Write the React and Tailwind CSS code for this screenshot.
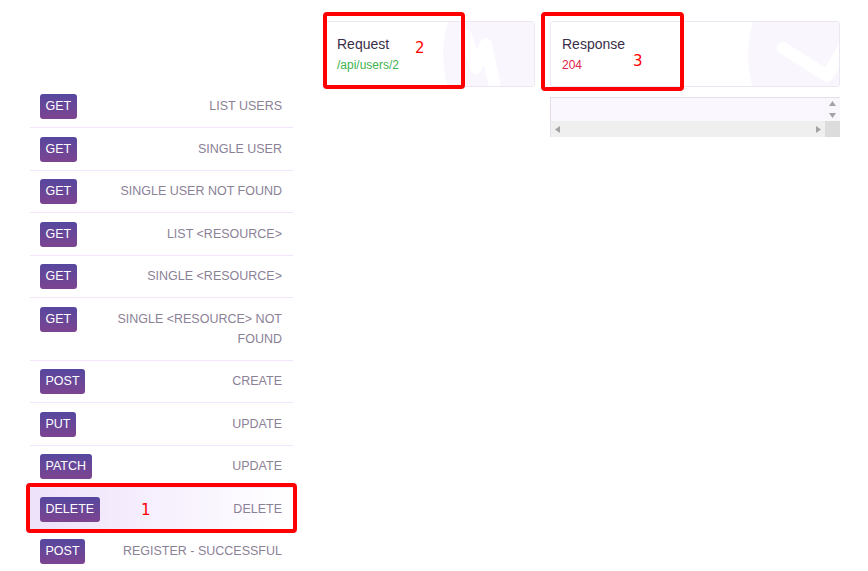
import React from "react";

const endpoints = [
    { method: "GET", label: "LIST USERS" },
    { method: "GET", label: "SINGLE USER" },
    { method: "GET", label: "SINGLE USER NOT FOUND" },
    { method: "GET", label: "LIST <RESOURCE>" },
    { method: "GET", label: "SINGLE <RESOURCE>" },
    { method: "GET", label: "SINGLE <RESOURCE> NOT FOUND" },
    { method: "POST", label: "CREATE" },
    { method: "PUT", label: "UPDATE" },
    { method: "PATCH", label: "UPDATE" },
    { method: "DELETE", label: "DELETE", active: true },
    { method: "POST", label: "REGISTER - SUCCESSFUL" },
];

function Watermark({ width, shape }) {
    return (
        <svg
            className="absolute inset-0 pointer-events-none"
            width={width}
            height="66"
            viewBox={`0 0 ${width} 66`}
        >
            <circle cx={width + 17} cy="33" r="110" fill="#faf6fe" />
            <polyline
                points={shape}
                fill="none"
                stroke="#ffffff"
                strokeWidth="12"
                strokeLinecap="round"
                strokeLinejoin="round"
            />
        </svg>
    );
}

function Card({ width, title, value, valueClass, shape }) {
    return (
        <div
            className="relative overflow-hidden h-[66px] rounded-[3px] border border-[#ece7f1] bg-white pl-[11px] pt-[12px]"
            style={{ width }}
        >
            <Watermark width={width} shape={shape} />
            <div className="relative text-[14px] leading-[20px] text-[#3a2e4a]">{title}</div>
            <div className={`relative text-[12px] leading-[22px] ${valueClass}`}>{value}</div>
        </div>
    );
}

function Arrow({ dir }) {
    const paths = {
        up: "M0 5 L3.5 0 L7 5 Z",
        down: "M0 0 L7 0 L3.5 5 Z",
        left: "M5 0 L5 7 L0 3.5 Z",
        right: "M0 0 L5 3.5 L0 7 Z",
    };
    const vertical = dir === "up" || dir === "down";
    return (
        <svg width={vertical ? 7 : 5} height={vertical ? 5 : 7}>
            <path d={paths[dir]} fill="#a3a3a3" />
        </svg>
    );
}

export default function App() {
    return (
        <div className="relative w-[868px] h-[571px] overflow-hidden bg-white font-['Liberation_Sans',Arial,sans-serif]">
            <div className="flex items-start">
                {/* ================= ENDPOINT LIST ================= */}
                <ul className="ml-[30px] mt-[85.5px] w-[263px]">
                    {endpoints.map((e, i) => (
                        <li
                            key={i}
                            className={`flex items-start pl-[10px] pr-[11px] py-[10.75px] border-b border-[#f3e6fc] ${
                                e.active ? "bg-linear-to-r from-[#eee1fb] to-white" : ""
                            }`}
                        >
                            <span className="-mt-[2px] -mb-[3px] h-[25px] leading-[25px] px-[5.5px] rounded-[3px] text-white text-[12.5px] bg-linear-to-b from-[#56479f] to-[#7c4490]">
                                {e.method}
                            </span>
                            <span className="ml-[10px] flex-1 text-right text-[12.5px] leading-[20px] text-[#8b8196]">
                                {e.label}
                            </span>
                        </li>
                    ))}
                </ul>

                {/* ================= REQUEST / RESPONSE ================= */}
                <div className="ml-[32px] mt-[21px]">
                    <div className="flex gap-[15px]">
                        <Card
                            width={210}
                            title="Request"
                            value="/api/users/2"
                            valueClass="text-[#3fb24f]"
                            shape="140,14 150,46 160,22 170,70"
                        />
                        <Card
                            width={290}
                            title="Response"
                            value="204"
                            valueClass="text-[#e01e4b]"
                            shape="232,26 276,54 300,14"
                        />
                    </div>

                    <div className="ml-[225px] mt-[10px] w-[290px] h-[40px] border-t border-l border-[#e6dded] flex flex-col">
                        <div className="flex flex-1">
                            <div className="flex-1 bg-[#fbf7fe]" />
                            <div className="w-[15px] bg-[#f9f7fb] flex flex-col items-center justify-between py-[3px]">
                                <Arrow dir="up" />
                                <Arrow dir="down" />
                            </div>
                        </div>
                        <div className="flex h-[16px]">
                            <div className="flex-1 bg-[#efefef] flex items-center justify-between px-[4px]">
                                <Arrow dir="left" />
                                <Arrow dir="right" />
                            </div>
                            <div className="w-[15px] bg-[#dcdcdc]" />
                        </div>
                    </div>
                </div>
            </div>

            {/* ================= ANNOTATIONS ================= */}
            <div className="absolute left-[26px] top-[483px] w-[271px] h-[50px] border-[4px] border-[#ff0000] rounded-[4px]" />
            <span className="absolute left-[141px] top-[500px] text-[15px] leading-[20px] text-[#ff0000] font-['DejaVu_Sans',sans-serif]">1</span>

            <div className="absolute left-[323px] top-[12px] w-[142px] h-[77px] border-[4px] border-[#ff0000] rounded-[4px]" />
            <span className="absolute left-[415px] top-[38px] text-[15px] leading-[20px] text-[#ff0000] font-['DejaVu_Sans',sans-serif]">2</span>

            <div className="absolute left-[541px] top-[12px] w-[143px] h-[79px] border-[4px] border-[#ff0000] rounded-[4px]" />
            <span className="absolute left-[633px] top-[51px] text-[15px] leading-[20px] text-[#ff0000] font-['DejaVu_Sans',sans-serif]">3</span>
        </div>
    );
}
